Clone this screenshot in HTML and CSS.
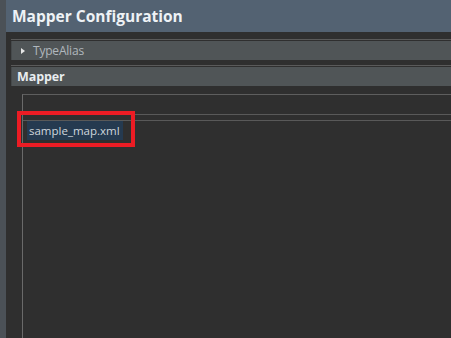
FILE: index.html
```html
<!DOCTYPE html>
<html>
<head>
<meta charset="utf-8">
<link rel="stylesheet" href="styles.css">
</head>
<body>
<div class="app">
  <div class="strip"></div>
  <div class="main">
    <div class="title">Mapper Configuration</div>
    <div class="content">
      <div class="panel">
        <div class="panel-head">
          <span class="tri"></span>
          <span class="label">TypeAlias</span>
        </div>
      </div>
      <div class="panel panel-2">
        <div class="panel-head">
          <span class="label bold">Mapper</span>
        </div>
      </div>
      <div class="frame">
        <div class="frame-head"></div>
        <div class="rows">
          <div class="row">
            <span class="item">sample_map.xml</span>
          </div>
        </div>
      </div>
    </div>
  </div>
</div>
<div class="highlight"></div>
</body>
</html>
```

FILE: styles.css
```css
html, body {
  margin: 0;
  padding: 0;
}
body {
  width: 451px;
  height: 338px;
  overflow: hidden;
  background: #2f2f2f;
  font-family: "Open Sans", "DejaVu Sans", sans-serif;
  position: relative;
}
.app {
  display: flex;
  height: 338px;
}
.strip {
  width: 6px;
  flex: none;
  background: #4b5157;
}
.main {
  flex: 1;
  display: flex;
  flex-direction: column;
  min-width: 0;
}
.title {
  height: 32px;
  line-height: 32px;
  background: #536272;
  color: #eef2f6;
  font-weight: 700;
  font-size: 15.5px;
  padding-left: 6px;
  white-space: nowrap;
}
.content {
  flex: 1;
  padding: 7px 0 0 5px;
  display: flex;
  flex-direction: column;
}
.panel {
  border-top: 1px solid #5a5a5a;
  padding-top: 1px;
}
.panel-2 {
  margin-top: 5px;
}
.panel-head {
  height: 19px;
  background: #505557;
  border-left: 1px solid #45494b;
  display: flex;
  align-items: center;
  line-height: 16px;
  font-size: 12px;
}
.tri {
  width: 0;
  height: 0;
  border-top: 3px solid transparent;
  border-bottom: 3px solid transparent;
  border-left: 4px solid #e6e6e6;
  margin-left: 9px;
  margin-right: 8px;
}
.label {
  color: #b0b7bd;
  letter-spacing: -0.2px;
}
.label.bold {
  color: #e9edf0;
  font-weight: 700;
  font-size: 12.5px;
  letter-spacing: -0.1px;
  margin-left: 5px;
}
.frame {
  flex: 1;
  margin: 8px 0 0 11px;
  border-left: 1px solid #6a6a6a;
  border-top: 1px solid #5e5e5e;
  display: flex;
  flex-direction: column;
}
.frame-head {
  height: 19px;
  border-bottom: 1px solid #595959;
}
.rows {
  margin-top: 5px;
  border-top: 1px solid #595959;
}
.row {
  padding-left: 4px;
  display: flex;
}
.item {
  display: block;
  height: 19px;
  line-height: 19px;
  padding: 0 3px 0 2px;
  background: #253a50;
  color: #cfd6dd;
  font-size: 11.5px;
  white-space: nowrap;
}
.highlight {
  position: absolute;
  left: 17px;
  top: 111px;
  width: 110px;
  height: 28px;
  border: 4px solid #ec1c24;
}
```
